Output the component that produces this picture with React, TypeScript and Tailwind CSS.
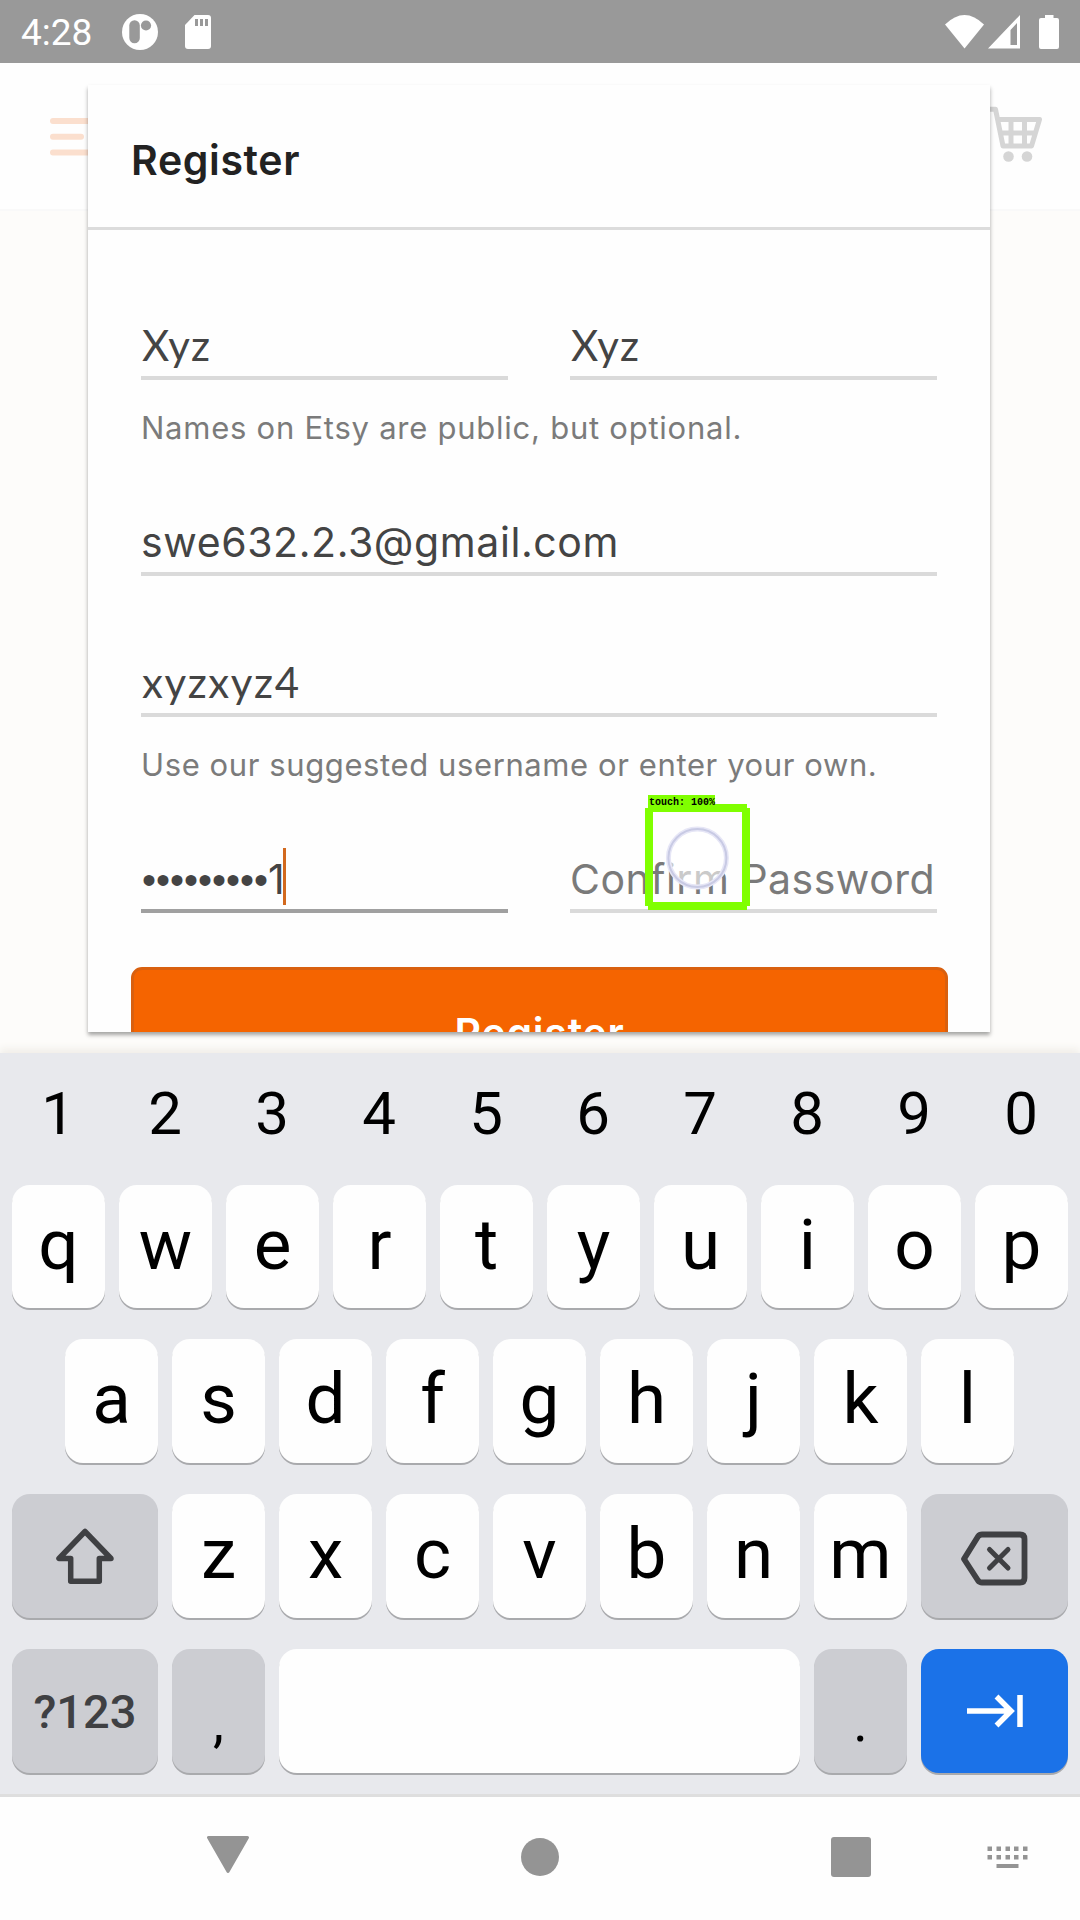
import type { ReactNode } from 'react';

function StatusBar() {
  return (
    <div className="flex h-[63px] items-center bg-[#999999] pl-[21px] pr-[21px] font-[Roboto] text-white">
      <span className="w-[72px] pt-[2px] text-[37px] leading-none">4:28</span>
      <svg className="ml-[29px]" width="36" height="36" viewBox="0 0 36 36">
        <circle cx="18" cy="18" r="18" fill="#fff" />
        <rect x="7.3" y="6.3" width="10.5" height="23" rx="5.2" fill="#999" />
        <circle cx="24" cy="11.5" r="5.1" fill="#999" />
      </svg>
      <svg className="ml-[27px]" width="26" height="34" viewBox="0 0 26 34">
        <path d="M9.5 0H23a3 3 0 0 1 3 3v28a3 3 0 0 1-3 3H3a3 3 0 0 1-3-3V10z" fill="#fff" />
        <path d="M10 4h3v7h-3zM15 4h3v7h-3zM20 4h3v7h-3z" fill="#999" />
      </svg>
      <svg className="ml-auto" width="39" height="34" viewBox="0 0 39 34">
        <path d="M0 9.5Q19.500 -9.500 39 9.500L19.500 33.500z" fill="#fff" />
      </svg>
      <svg className="ml-[4px]" width="32" height="34" viewBox="0 0 32 34">
        <path fillRule="evenodd" d="M32 0v33.500H0zM22.500 15v15H29V8z" fill="#fff" />
      </svg>
      <svg className="ml-[19px]" width="20" height="34" viewBox="0 0 20 34">
        <path d="M6 0h8.500v3H18a2 2 0 0 1 2 2v27a2 2 0 0 1-2 2H2a2 2 0 0 1-2-2V5a2 2 0 0 1 2-2h4z" fill="#fff" />
      </svg>
    </div>
  );
}

function SiteHeader() {
  return (
    <div className="flex h-[148px] items-start justify-between border-b-2 border-[#f9f9f9] bg-[#fefefe] pl-[49px] pr-[36px]">
      <svg className="mt-[55px]" width="60" height="40" viewBox="0 0 60 40" stroke="#fbdfce" strokeWidth="6" strokeLinecap="round">
        <path d="M4 3H50M4 18.700H32M4 34.500H50" />
      </svg>
      <svg className="mt-[43px]" width="60" height="56" viewBox="0 0 60 56" fill="none" stroke="#d5d5d5" strokeWidth="5" strokeLinejoin="round" strokeLinecap="round">
        <path d="M0 3.300H11.500L19 40H47.500L55.500 13.500H15M18 27H51M27 14V40M40.500 14V40" />
        <circle cx="24.500" cy="50.500" r="5.300" fill="#d5d5d5" stroke="none" />
        <circle cx="43" cy="50.500" r="5.300" fill="#d5d5d5" stroke="none" />
      </svg>
    </div>
  );
}

function Field({ children, active }: { children: ReactNode; active?: boolean }) {
  return (
    <div
      className={
        'flex h-[64px] flex-1 items-center whitespace-nowrap border-b-4 text-[41px] leading-[60px] text-[#444444] ' +
        (active ? 'border-[#a0a0a0]' : 'border-[#dadada]')
      }
    >
      {children}
    </div>
  );
}

function TouchMarker() {
  return (
    <div className="absolute left-[557px] top-[710px] h-[116px] w-[105px]">
      <svg className="absolute left-0 top-[9px]" width="105" height="106" viewBox="0 0 105 106">
        <circle cx="52.400" cy="54" r="29" fill="#fff" fillOpacity="0.6" stroke="#e6e6f6" strokeWidth="5" />
        <circle cx="52.400" cy="54" r="29" fill="none" stroke="#c8cae4" strokeWidth="2" />
        <path fill="#80ff00" fillRule="evenodd" d="M3 0H102V4H105V102H102V106H3V102H0V4H3zM8 8V98H97V8z" />
      </svg>
      <div className="absolute left-[3px] top-0 h-[13px] w-[67px] whitespace-pre bg-[#80ff00] pl-px font-['Liberation_Mono'] text-[10px] font-bold leading-[15px] text-black">
        touch: 100%
      </div>
    </div>
  );
}

function RegisterDialog() {
  return (
    <div className="absolute left-[88px] top-[85px] h-[947px] w-[902px] overflow-hidden bg-[#fefefe] font-[Inter]">
      <div className="flex h-[145px] items-center border-b-[3px] border-[#dcdcdc] pl-[43px] pt-[8px]">
        <h1 className="text-[41px] font-semibold leading-none tracking-[0.65px] text-[#222222]">Register</h1>
      </div>
      <div className="px-[53px] pt-[86px]">
        <div className="flex gap-[62px]">
          <Field>
            <span className="pb-[2px] pl-px font-[Lato] text-[42px] tracking-[1px]">Xyz</span>
          </Field>
          <Field>
            <span className="pb-[2px] pl-px font-[Lato] text-[42px] tracking-[1px]">Xyz</span>
          </Field>
        </div>
        <p className="mt-[24px] whitespace-nowrap text-[31px] leading-[47px] tracking-[0.75px] text-[#7b7b7b]">Names on Etsy are public, but optional.</p>
        <div className="mt-[61px] flex">
          <Field>
            <span className="tracking-[0.59px]">swe632.2.3@gmail.com</span>
          </Field>
        </div>
        <div className="mt-[77px] flex">
          <Field>
            <span className="pb-[2px] pl-px font-[Lato] text-[42px] tracking-[1.6px]">xyzxyz4</span>
          </Field>
        </div>
        <p className="mt-[24px] whitespace-nowrap text-[31px] leading-[47px] tracking-[0.6px] text-[#7b7b7b]">Use our suggested username or enter your own.</p>
        <div className="mt-[61px] flex gap-[62px]">
          <Field active>
            <span className="pl-px pt-px font-['Liberation_Sans'] text-[40px]">•••••••••</span>
            <span className="w-[15px]">1</span>
            <span className="mb-[6px] h-[57px] w-[3px] bg-[#d2691e]" />
          </Field>
          <Field>
            <span className="tracking-[0.5px] text-[#7a7a7a]">Confirm Password</span>
          </Field>
        </div>
        <button className="-ml-[10px] mt-[54px] block h-[132px] w-[817px] rounded-[11px] border-[3px] border-[#d9600f] bg-[#f56400] text-[41px] font-semibold leading-none tracking-[0.76px] text-white">
          Register
        </button>
      </div>
      <TouchMarker />
    </div>
  );
}

const keyBase = 'flex h-full items-center justify-center rounded-[18px] leading-none shadow-[0_2px_0_#a9aaad]';

function Key({ children, className = 'w-[93px] bg-[#fefefe] pb-[5px]' }: { children?: ReactNode; className?: string }) {
  return <div className={keyBase + ' ' + className}>{children}</div>;
}

function Letters({ keys }: { keys: string }) {
  return (
    <>
      {keys.split('').map((k) => (
        <Key key={k}>{k}</Key>
      ))}
    </>
  );
}

function Keyboard() {
  return (
    <div className="h-[741px] bg-[#e8e9ed] pl-[12px] font-[Roboto] text-[71px] text-black shadow-[0_-4px_8px_#f0ede8]">
      <div className="flex h-[132px] gap-[14px] pt-[29px] text-[60px] leading-[64px]">
        {'1234567890'.split('').map((n) => (
          <span key={n} className="w-[93px] pr-px text-center">{n}</span>
        ))}
      </div>
      <div className="flex h-[123px] gap-[14px]">
        <Letters keys="qwertyuiop" />
      </div>
      <div className="mt-[31px] flex h-[124px] gap-[14px] pl-[53px]">
        <Letters keys="asdfghjkl" />
      </div>
      <div className="mt-[31px] flex h-[124px] gap-[14px]">
        <Key className="w-[146px] bg-[#cccdd2]">
          <svg width="60" height="60" viewBox="0 0 60 60" fill="none" stroke="#3f4043" strokeWidth="5.500" strokeLinejoin="round">
            <path d="M30 5.500L4 32.500H15.700V55.200H44.300V32.500H56z" />
          </svg>
        </Key>
        <Letters keys="zxcvbnm" />
        <Key className="w-[147px] bg-[#cccdd2] pr-[2px] pt-[5px]">
          <svg width="68" height="56" viewBox="0 0 68 56" fill="none" stroke="#3f4043" strokeWidth="5.800" strokeLinejoin="round" strokeLinecap="round">
            <path d="M4 28L18 5.500Q19.500 3.500 22 3.500H60Q64.500 3.500 64.500 8V47Q64.500 51.500 60 51.500H22Q19.500 51.500 18 49.500z" />
            <path d="M29.500 18.500L48 37M48 18.500L29.500 37" strokeWidth="5" />
          </svg>
        </Key>
      </div>
      <div className="mt-[31px] flex h-[124px] gap-[14px]">
        <Key className="w-[146px] bg-[#cccdd2] text-[47px] font-medium text-[#3f4043]">?123</Key>
        <Key className="w-[93px] bg-[#cccdd2] pt-[22px] text-[55px]">,</Key>
        <Key className="w-[521px] bg-[#fefefe]" />
        <Key className="w-[93px] bg-[#cccdd2] pt-[22px] text-[55px]">.</Key>
        <Key className="w-[147px] bg-[#1b72e8]">
          <svg width="56" height="34" viewBox="0 0 56 34" fill="none" stroke="#fff" strokeWidth="5.500">
            <path d="M0 17H44M29.500 2.500L44 17L29.500 31.500M53 1V33" />
          </svg>
        </Key>
      </div>
    </div>
  );
}

function NavBar() {
  return (
    <div className="flex h-[126px] items-start border-t-[3px] border-[#dedede] bg-[#fefefe] pl-[207px] pr-[52px] text-[#949494]">
      <svg className="mt-[39px]" width="42" height="38" viewBox="0 0 42 38" fill="currentColor" stroke="currentColor" strokeWidth="3" strokeLinejoin="round">
        <path d="M1.500 1.500H40.500L21 35.500z" />
      </svg>
      <div className="ml-[272px] mt-[41px] size-[38px] rounded-full bg-[#949494]" />
      <div className="ml-[272px] mt-[40px] h-[40px] w-[40px] rounded-[3px] bg-[#949494]" />
      <svg className="ml-[116px] mt-[49px]" width="41" height="23" viewBox="0 0 41 23" fill="currentColor">
        {[0, 9, 18, 26.500, 35.500].map((x) => (
          <g key={x}>
            <rect x={x + 0.5} y="0.500" width="4.500" height="4.500" />
            <rect x={x + 0.5} y="9" width="4.500" height="4.500" />
          </g>
        ))}
        <rect x="9.500" y="18" width="22" height="4" />
      </svg>
    </div>
  );
}

export default function App() {
  return (
    <div className="relative flex h-[1920px] w-[1080px] flex-col overflow-hidden bg-[#fdfcfa]">
      <StatusBar />
      <div className="h-[990px]">
        <SiteHeader />
      </div>
      <Keyboard />
      <NavBar />
      <div className="absolute left-[88px] top-[85px] h-[947px] w-[902px] shadow-[0_3px_4px_rgba(0,0,0,0.35)]" />
      <RegisterDialog />
    </div>
  );
}
